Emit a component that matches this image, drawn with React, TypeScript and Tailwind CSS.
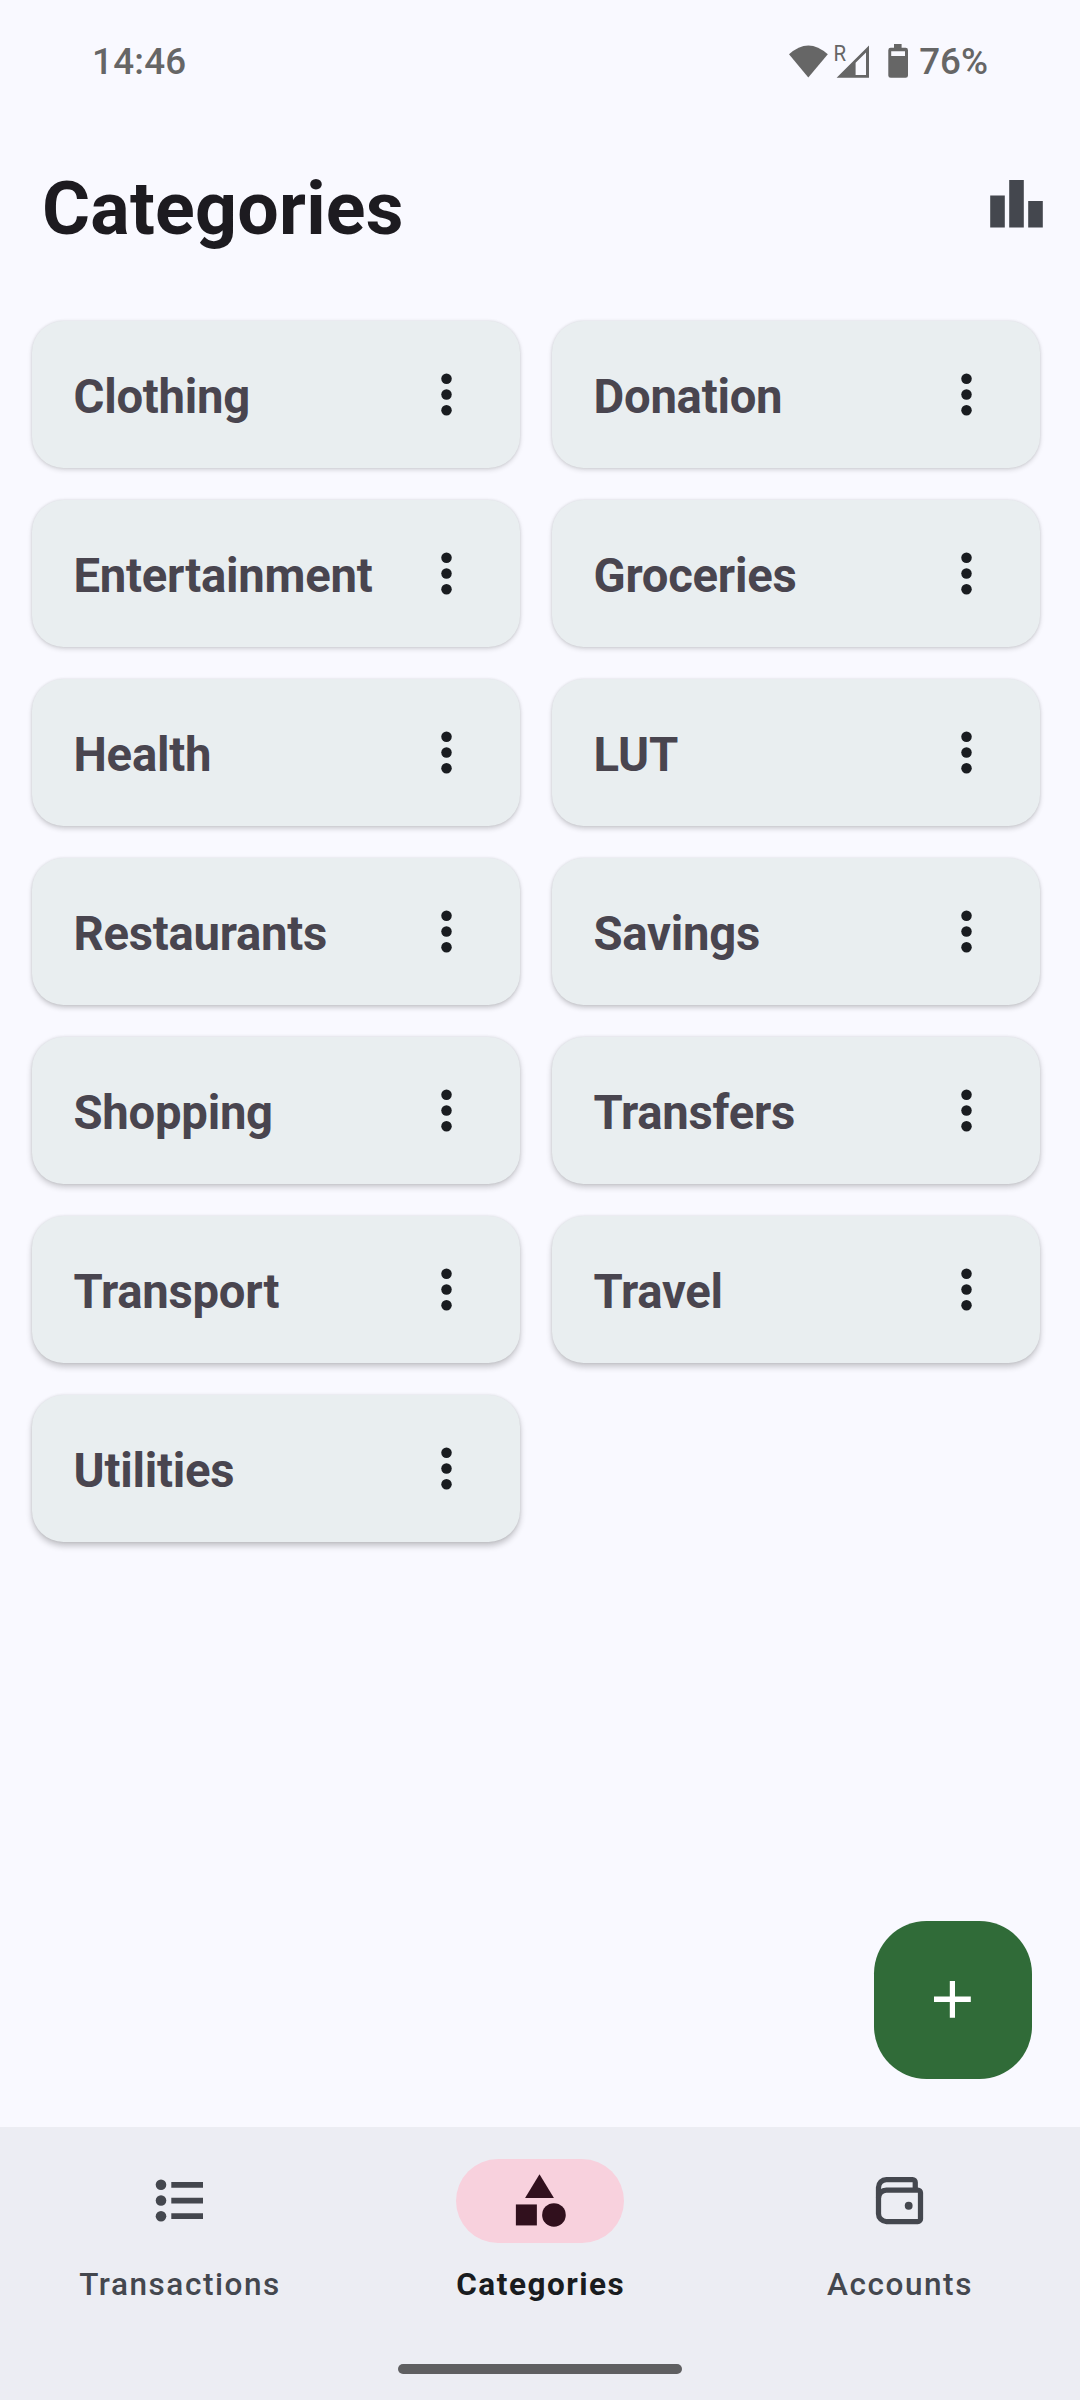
import React from "react";

const categories = [
  "Clothing",
  "Donation",
  "Entertainment",
  "Groceries",
  "Health",
  "LUT",
  "Restaurants",
  "Savings",
  "Shopping",
  "Transfers",
  "Transport",
  "Travel",
  "Utilities",
];

const rowShadows = [
  "shadow-[0_2px_5px_rgba(0,0,0,0.14),0_0_3px_rgba(0,0,0,0.10)]",
  "shadow-[0_2px_5px_rgba(0,0,0,0.15),0_0_3px_rgba(0,0,0,0.10)]",
  "shadow-[0_3px_5px_rgba(0,0,0,0.16),0_0_3px_rgba(0,0,0,0.10)]",
  "shadow-[0_3px_5px_rgba(0,0,0,0.18),0_0_3px_rgba(0,0,0,0.10)]",
  "shadow-[0_3px_6px_rgba(0,0,0,0.20),0_0_3px_rgba(0,0,0,0.10)]",
  "shadow-[0_4px_6px_rgba(0,0,0,0.20),0_0_3px_rgba(0,0,0,0.10)]",
  "shadow-[0_4px_6px_rgba(0,0,0,0.22),0_0_3px_rgba(0,0,0,0.10)]",
];

function StatusBar() {
  return (
    <header className="flex h-[122px] items-start justify-between pt-[39px] pr-[92px] pl-[92px] text-[36.75px] leading-[44px] font-medium text-[#666666]">
      <span className="relative top-[1px] tracking-[0.25px]">14:46</span>
      <div className="flex items-start">
        <svg className="-mt-[5px] block h-[50px] w-[124px] shrink-0" viewBox="0 -10 124 50" fill="#666666" aria-hidden="true">
          <path d="M5 10.3Q24.3-7.5 43.8 10.3L24.3 33.5Z" />
          <path fillRule="evenodd" d="M52.6 33.8 85 1.6V33.8ZM71.6 31H82V8.6L71.6 18.8Z" />
          <text x="49.6" y="17.2" fontSize="22.5" fontWeight="400" textLength="12.6" lengthAdjust="spacingAndGlyphs">
            R
          </text>
          <path
            fillRule="evenodd"
            d="M110 0H117.6V3.8H121.6Q124 3.8 124 6.2V31.4Q124 33.8 121.6 33.8H106.7Q104.3 33.8 104.3 31.4V6.2Q104.3 3.8 106.7 3.8H110ZM107.2 7.3V12H121V7.3Z"
          />
        </svg>
        <span className="relative top-[1px] ml-[11px]">76%</span>
      </div>
    </header>
  );
}

function MoreIcon() {
  return (
    <svg className="block size-[63px]" viewBox="0 0 24 24" fill="#191c20" aria-hidden="true">
      <circle cx="12" cy="6" r="2" />
      <circle cx="12" cy="12" r="2" />
      <circle cx="12" cy="18" r="2" />
    </svg>
  );
}

function CategoryCard({ name, shadow }: { name: string; shadow: string }) {
  return (
    <li
      className={
        "flex h-[147px] items-center justify-between rounded-[31.5px] bg-[#e9eef0] pr-[42.5px] pl-[41.5px] " + shadow
      }
    >
      <span className="relative top-[3px] text-[47.25px] leading-[63px] font-bold tracking-[-0.25px] text-[#49454f]">
        {name}
      </span>
      <button type="button" aria-label={name + " options"}>
        <MoreIcon />
      </button>
    </li>
  );
}

function ListIcon() {
  return (
    <svg className="block size-[63px]" viewBox="0 0 63 63" fill="#44474e" aria-hidden="true">
      <circle cx="13" cy="15.8" r="5.3" />
      <circle cx="13" cy="31.5" r="5.3" />
      <circle cx="13" cy="47.2" r="5.3" />
      <path d="M23.3 13H55V18.8H23.3ZM23.3 28.8H55V34.6H23.3ZM23.3 44.2H55V50H23.3Z" />
    </svg>
  );
}

function ShapesIcon() {
  return (
    <svg className="block size-[63px]" viewBox="0 0 24 24" fill="#31101d" aria-hidden="true">
      <path d="M12 2 6.5 11h11z" />
      <circle cx="17.5" cy="17.5" r="4.5" />
      <path d="M3 13.5h8v8H3z" />
    </svg>
  );
}

function WalletIcon() {
  return (
    <svg className="block size-[63px]" viewBox="0 0 24 24" fill="none" stroke="#44474e" strokeWidth="2" aria-hidden="true">
      <path d="M4 11V7a3 3 0 0 1 3-3H17a1 1 0 0 1 1 1V8" />
      <path d="M7 8H19a1 1 0 0 1 1 1V19a1 1 0 0 1-1 1H7a3 3 0 0 1-3-3V11a3 3 0 0 1 3-3Z" />
      <circle cx="15.5" cy="14" r="1.5" fill="#44474e" stroke="none" />
    </svg>
  );
}

function NavItem({ label, icon, active = false }: { label: string; icon: React.ReactNode; active?: boolean }) {
  return (
    <a className="flex flex-1 flex-col items-center" aria-current={active ? "page" : undefined}>
      <span
        className={
          active
            ? "flex h-[84px] w-[168px] items-start justify-center rounded-full bg-[#f8d1dd] pt-[10px] pr-[1px]"
            : "flex h-[84px] w-[168px] items-start justify-center pt-[10px] pr-[1px]"
        }
      >
        {icon}
      </span>
      <span
        className={
          active
            ? "mt-[21px] pl-[1.5px] text-[31.5px] leading-[42px] font-bold tracking-[1.5px] text-[#191c20]"
            : "mt-[21px] text-[31.5px] leading-[42px] font-medium tracking-[1.55px] text-[#44474e]"
        }
      >
        {label}
      </span>
    </a>
  );
}

export default function App() {
  return (
    <div className="relative flex h-[2400px] w-[1080px] flex-col overflow-hidden bg-[#f9f9ff] font-[Roboto,sans-serif]">
      <StatusBar />

      <div className="flex h-[199px] items-start justify-between pr-[37px] pl-[42px]">
        <h1 className="mt-[43px] text-[73.5px] leading-[88px] font-bold tracking-[0.25px] text-[#1d1b20]">Categories</h1>
        <svg className="mt-[58px] block h-[48px] w-[53px]" viewBox="0 0 53 48" fill="#44474e" aria-hidden="true">
          <path d="M0.2 15.4H14.8V47.5H0.2ZM19.2 0H33.8V47.5H19.2ZM38.2 21H52.8V47.5H38.2Z" />
        </svg>
      </div>

      <main className="flex-1 pr-[40px] pl-[32px]">
        <ul className="grid grid-cols-2 gap-x-[32px] gap-y-[32px]">
          {categories.map((name, index) => (
            <CategoryCard key={name} name={name} shadow={rowShadows[Math.floor(index / 2)]} />
          ))}
        </ul>
      </main>

      <button
        type="button"
        aria-label="Add category"
        className="absolute top-[1921px] left-[874px] flex size-[158px] items-center justify-center rounded-[52.5px] bg-[#306b38]"
      >
        <svg className="mr-[2px] mb-[1px] block size-[63px]" viewBox="0 0 63 63" fill="#ffffff" aria-hidden="true">
          <path d="M28.8 13H34V28.4H49.8V34.1H34V49.7H28.8V34.1H13V28.4H28.8Z" />
        </svg>
      </button>

      <footer className="flex h-[273px] flex-col items-center justify-between bg-[#ecedf3] pt-[32px] pb-[26px]">
        <nav className="flex w-full">
          <NavItem label="Transactions" icon={<ListIcon />} />
          <NavItem label="Categories" icon={<ShapesIcon />} active />
          <NavItem label="Accounts" icon={<WalletIcon />} />
        </nav>
        <div className="h-[10px] w-[284px] rounded-full bg-[#5f5f61]" />
      </footer>
    </div>
  );
}
